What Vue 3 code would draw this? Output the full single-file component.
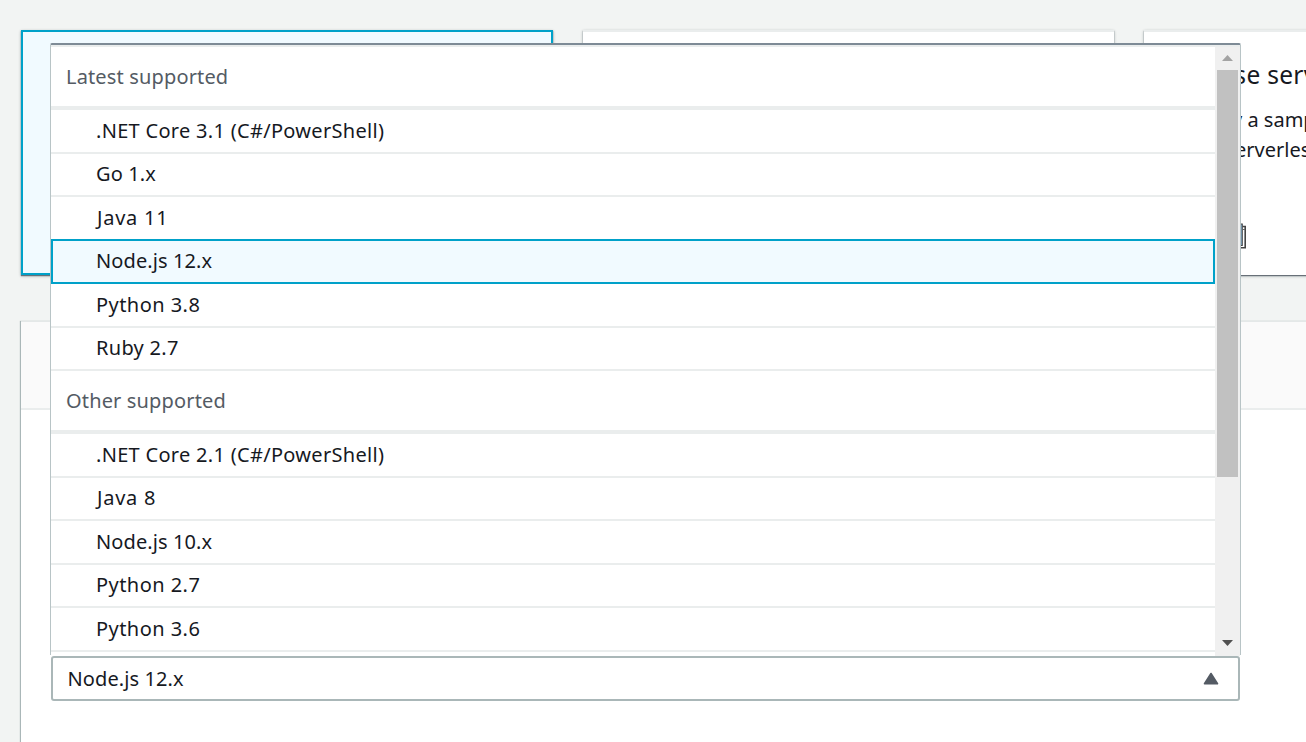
<script setup>
const groups = [
  {
    label: 'Latest supported',
    tone: 'latest',
    options: [
      { name: '.NET Core 3.1 (C#/PowerShell)', tone: 'net' },
      { name: 'Go 1.x', tone: 'tight' },
      { name: 'Java 11', tone: 'java' },
      { name: 'Node.js 12.x', tone: 'tight' },
      { name: 'Python 3.8', tone: 'python' },
      { name: 'Ruby 2.7', tone: 'net' },
    ],
  },
  {
    label: 'Other supported',
    tone: 'latest',
    options: [
      { name: '.NET Core 2.1 (C#/PowerShell)', tone: 'net' },
      { name: 'Java 8', tone: 'java' },
      { name: 'Node.js 10.x', tone: 'tight' },
      { name: 'Python 2.7', tone: 'python' },
      { name: 'Python 3.6', tone: 'python' },
    ],
  },
]
const selected = 'Node.js 12.x'
</script>

<template>
  <div class="page">
    <div class="cards">
      <div class="card active"></div>
      <div class="card"></div>
      <div class="card browse">
        <h2>Browse serverless</h2>
        <p><span class="first">Deploy a sample</span><br /><span class="second">Serverless</span></p>
        <svg class="pic" width="30" height="28" viewBox="0 0 30 28">
          <path d="M0 2h25.2v21.5H0z" fill="#8fc3ea" stroke="#444" stroke-width="1.2" />
          <path d="M25.5 4.5h2.7v21.3h-6" fill="none" stroke="#444" stroke-width="1.6" />
          <path d="M25 7.5h3" stroke="#666" />
        </svg>
      </div>
    </div>

    <section class="panel">
      <header class="panel-head"></header>
      <div class="field">
        <span class="t tight">{{ selected }}</span>
        <svg width="16" height="13" viewBox="0 0 16 13">
          <path d="M8 1.5 14.5 11.8H1.5z" fill="#545b64" stroke="#545b64" stroke-width="1.6" stroke-linejoin="round" />
        </svg>
      </div>
    </section>

    <div class="menu">
      <div class="list">
        <div v-for="g in groups" :key="g.label" class="group">
          <div class="group-label"><span class="t" :class="g.tone">{{ g.label }}</span></div>
          <ul>
            <li v-for="o in g.options" :key="o.name" :class="{ selected: o.name === selected }">
              <span class="t" :class="o.tone">{{ o.name }}</span>
            </li>
          </ul>
        </div>
      </div>
      <div class="scroll">
        <svg width="11" height="6" viewBox="0 0 11 6"><path d="M5.5 0 11 6H0z" fill="#a3a3a3" /></svg>
        <div class="thumb"></div>
        <svg class="down" width="11" height="6" viewBox="0 0 11 6"><path d="M0 0H11L5.5 6z" fill="#505050" /></svg>
      </div>
    </div>
  </div>
</template>

<style>
body {
  background: #f2f3f3;
  overflow: hidden;
}
</style>

<style scoped>
* {
  box-sizing: border-box;
}
.page {
  position: relative;
  width: 1306px;
  height: 742px;
  overflow: hidden;
  padding: 30px 0 0 21px;
  background: #f2f4f3;
  color: #16191f;
  font-family: "Noto Sans", "Open Sans", sans-serif;
  font-size: 20px;
}
.cards {
  display: grid;
  grid-template-columns: 532px 531px 532px;
  column-gap: 30px;
  height: 245px;
}
.card {
  background: #fff;
  border-top: 2px solid #eaeded;
  box-shadow: 0 1px 1px #687078, 0 1px 3px rgba(0, 28, 36, 0.3);
}
.card.active {
  background: #f1faff;
  border: 2px solid #00a1c9;
}
.browse {
  padding: 26px 0 0 60px;
  white-space: nowrap;
}
.browse h2 {
  margin: 0 0 0 -30px;
  font-size: 24.5px;
  font-weight: 400;
  line-height: 34px;
  letter-spacing: 0.3px;
}
.browse p {
  margin: 13px 0 0;
  line-height: 30px;
}
.first {
  margin-left: -27px;
}
.second {
  margin-left: 20px;
}
.pic {
  display: block;
  margin: 57px 0 0 13px;
}
.panel {
  margin-top: 46px;
  width: 1400px;
  height: 500px;
  background: #fff;
  border-top: 1px solid #e4e8e8;
  box-shadow: -1px 0 1px #aab7b8;
}
.panel-head {
  height: 88px;
  background: #fafafa;
  border-bottom: 2px solid #eaeded;
}
.field {
  display: flex;
  align-items: center;
  justify-content: space-between;
  width: 1189px;
  height: 45px;
  margin: 246px 0 0 30px;
  padding: 0 19px 0 14.5px;
  border: 2px solid #aab7b8;
  border-radius: 3px;
  background: #fff;
}
.t {
  line-height: 26px;
  white-space: nowrap;
}
.latest {
  letter-spacing: 0.15px;
}
.net {
  letter-spacing: 0.3px;
}
.tight {
  letter-spacing: 0.1px;
}
.java {
  margin-left: 1px;
  letter-spacing: 0.75px;
}
.python {
  letter-spacing: 0.45px;
}
.menu {
  position: absolute;
  left: 51px;
  top: 45px;
  display: flex;
  width: 1189px;
  height: 611px;
  overflow: hidden;
  background: #fff;
  border-top: 2px solid #eaeded;
}
.page::after {
  content: "";
  box-sizing: border-box;
  position: absolute;
  left: 50px;
  top: 43px;
  width: 1191px;
  height: 612px;
  border: 1px solid #b8c4c6;
  border-top: 2px solid #7e8b96;
  border-bottom: 0;
  border-radius: 2px 2px 0 0;
}
.list {
  width: 1164px;
}
.group-label {
  display: flex;
  align-items: center;
  height: 63px;
  padding: 0 15px;
  border-bottom: 4px solid #eaeded;
  color: #545b64;
}
ul {
  margin: 0;
  padding: 0;
  list-style: none;
}
li {
  display: flex;
  align-items: center;
  height: 43px;
  padding: 0 0 1px 45px;
  border-bottom: 2px solid #eaeded;
}
li:nth-child(odd) {
  height: 44px;
  padding-bottom: 0;
}
li.selected {
  position: relative;
  height: 45px;
  margin-top: -2px;
  padding: 0 0 2px 43px;
  border: 2px solid #00a1c9;
  background: #f1faff;
}
.scroll {
  display: flex;
  flex-direction: column;
  align-items: center;
  width: 25px;
  padding: 8px 1px 10px 0;
  background: #f0f0f0;
}
.thumb {
  width: 21px;
  height: 407px;
  margin: 9px 0 0 1px;
  background: #c1c1c1;
}
.down {
  margin-top: auto;
}
</style>
